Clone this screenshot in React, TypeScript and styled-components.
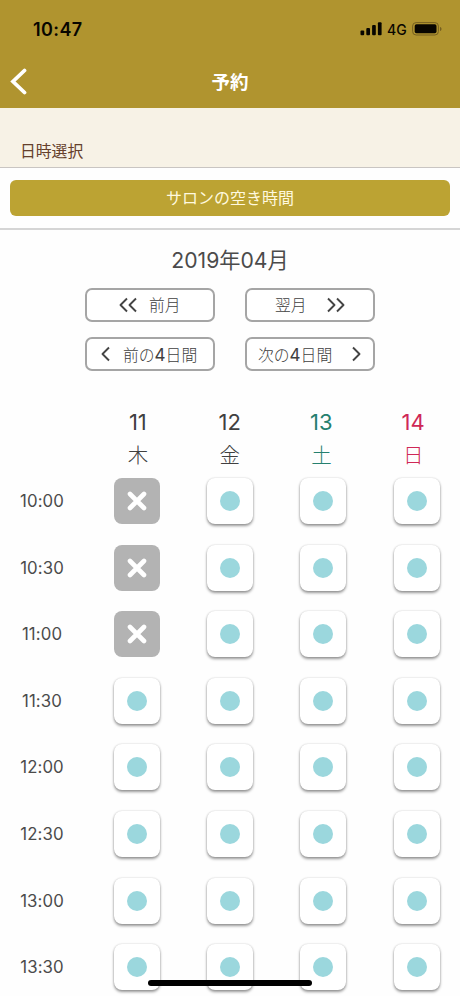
import React from "react";
import styled, { createGlobalStyle } from "styled-components";

const GlobalStyle = createGlobalStyle`
  * { box-sizing: border-box; }
  html, body { margin: 0; height: 100%; overflow: hidden; background: #fff; }
  body { font-family: Inter, "Noto Sans CJK JP", sans-serif; color: #4b4b4b; }
  button { font: inherit; color: inherit; margin: 0; padding: 0; border: 0; background: none; }
`;

const Screen = styled.main`
  position: relative;
  width: 460px;
  height: 996px;
  overflow: hidden;
  background: #fefefe;
`;

const Header = styled.header`
  height: 108px;
  background: #b0942f;
`;

const StatusBar = styled.div`
  height: 56px;
  padding: 2px 18px 0 33px;
  display: flex;
  align-items: center;
  justify-content: space-between;
  color: #080600;
`;

const Clock = styled.span`
  font-size: 18px;
  font-weight: 600;
  letter-spacing: 0.4px;
`;

const Indicators = styled.div`
  display: flex;
  align-items: center;
  svg { display: block; }
`;

const Network = styled.span`
  width: 20px;
  margin: 1px 5px 0 5px;
  font-size: 14px;
  line-height: 16px;
  font-weight: 500;
`;

const NavBar = styled.nav`
  height: 52px;
  display: grid;
  grid-template-columns: 60px 1fr 60px;
  align-items: center;
`;

const BackButton = styled.button`
  height: 52px;
  padding-left: 9px;
  display: flex;
  align-items: center;
`;

const Title = styled.h1`
  margin: 0;
  color: #fff;
  font-size: 18.5px;
  line-height: 28px;
  font-weight: 700;
  text-align: center;
`;

const SectionHeading = styled.h2`
  height: 60px;
  margin: 0;
  padding: 32px 20px 0;
  background: #f7f2e6;
  border-bottom: 1px solid #c9c5c2;
  color: #65402c;
  font-size: 15.8px;
  line-height: 24px;
  font-weight: 400;
`;

const Availability = styled.section`
  height: 62px;
  padding: 12px 10px 0;
  border-bottom: 2px solid #d5d5d5;
`;

const AvailabilityButton = styled.button`
  display: block;
  width: 440px;
  height: 36px;
  border-radius: 6px;
  background: #bca333;
  color: #fff9df;
  font-size: 16px;
  line-height: 34px;
  text-align: center;
`;

const Month = styled.h3`
  height: 58px;
  margin: 0;
  padding-top: 15px;
  font-size: 21.2px;
  line-height: 30px;
  font-weight: 380;
  text-align: center;
`;

const Pager = styled.div`
  display: grid;
  grid-template-columns: 130px 130px;
  gap: 15px 30px;
  justify-content: center;
`;

const PagerButton = styled.button<{ $start: number; $gap: number }>`
  height: 34px;
  padding-left: ${(p) => p.$start}px;
  border: 2px solid #a5a5a5;
  border-radius: 7px;
  background: #fff;
  display: flex;
  align-items: center;
  gap: ${(p) => p.$gap}px;
  font-size: 15.8px;
  line-height: 24px;
  font-weight: 300;
  white-space: nowrap;
  svg { display: block; flex: none; }
`;

const PagerLabel = styled.span`
  padding-top: 2px;
  color: #404040;
`;

const Digit = styled.span`
  font-size: 17px;
  font-weight: 400;
`;

const DayHeader = styled.div`
  height: 107px;
  padding: 33px 1px 0 92px;
  display: grid;
  grid-template-columns: repeat(4, 91.75px);
`;

const Day = styled.div<{ $color: string }>`
  display: flex;
  flex-direction: column;
  align-items: center;
  color: ${(p) => p.$color};
`;

const DayNumber = styled.span`
  height: 36px;
  font-size: 22px;
  line-height: 36px;
  font-weight: 380;
`;

const Weekday = styled.span`
  font-size: 20.5px;
  line-height: 32px;
  font-weight: 300;
`;

const Row = styled.div`
  height: 66.6px;
  padding-left: 20px;
  display: grid;
  grid-template-columns: 70px repeat(4, 93.4px);
  align-items: start;
`;

const Time = styled.time`
  width: 44px;
  text-align: center;
  font-size: 16.8px;
  line-height: 46px;
  letter-spacing: 0.1px;
  font-weight: 390;
`;

const Slot = styled.button<{ $open: boolean }>`
  width: 46px;
  height: 46px;
  justify-self: center;
  display: flex;
  align-items: center;
  justify-content: center;
  border-radius: 8px;
  background: ${(p) => (p.$open ? "#fff" : "#b3b3b3")};
  box-shadow: ${(p) => (p.$open ? "0 2px 3px rgba(0,0,0,.4), 0 0 2px rgba(0,0,0,.18)" : "none")};
`;

const Dot = styled.span`
  width: 20px;
  height: 20px;
  border-radius: 50%;
  background: #9bd7dd;
`;

const HomeIndicator = styled.div`
  position: absolute;
  left: 148px;
  top: 980px;
  width: 164px;
  height: 6px;
  border-radius: 3px;
  background: #000;
`;

const Arrow = ({ right = false, double = false }: { right?: boolean; double?: boolean }) => (
  <svg width={double ? 18 : 9} height="16" viewBox={`0 0 ${double ? 18 : 9} 16`} fill="none" stroke="#444" strokeWidth="1.9" strokeLinejoin="round">
    <path d={right ? "M1 1.5 7.5 8 1 14.5" : "M8 1.5 1.5 8 8 14.5"} />
    {double && <path d={right ? "M10 1.5 16.5 8 10 14.5" : "M17 1.5 10.5 8 17 14.5"} />}
  </svg>
);

const days = [
  { n: 11, w: "木", color: "#404040" },
  { n: 12, w: "金", color: "#404040" },
  { n: 13, w: "土", color: "#25806f" },
  { n: 14, w: "日", color: "#cf2856" },
];

const times = ["10:00", "10:30", "11:00", "11:30", "12:00", "12:30", "13:00", "13:30"];

export default function App() {
  return (
    <Screen>
      <GlobalStyle />
      <Header>
        <StatusBar>
          <Clock>10:47</Clock>
          <Indicators>
            <svg width="22" height="14" viewBox="0 0 22 14" fill="currentColor">
              <rect x="0.5" y="8.5" width="3.7" height="4.7" rx="1" />
              <rect x="6.3" y="6" width="3.7" height="7.2" rx="1" />
              <rect x="12.1" y="3" width="3.7" height="10.2" rx="1" />
              <rect x="17.9" y="0.3" width="3.7" height="12.9" rx="1" />
            </svg>
            <Network>4G</Network>
            <svg width="30" height="14" viewBox="0 0 30 14">
              <rect x="0.6" y="0.6" width="25.8" height="12.4" rx="3.5" fill="none" stroke="#755f20" />
              <rect x="2.7" y="2.3" width="21.8" height="9" rx="1.8" fill="currentColor" />
              <path d="M28 5v4c1-.4 1.5-1.1 1.5-2S29 5.400 28 5Z" fill="#755f20" />
            </svg>
          </Indicators>
        </StatusBar>
        <NavBar>
          <BackButton aria-label="戻る">
            <svg width="20" height="28" viewBox="0 0 20 28" fill="none" stroke="#fff" strokeWidth="3.8" strokeLinecap="round">
              <path d="M15.500 2.500 4 13.500 15.500 24.500" />
            </svg>
          </BackButton>
          <Title>予約</Title>
        </NavBar>
      </Header>
      <SectionHeading>日時選択</SectionHeading>
      <Availability>
        <AvailabilityButton>サロンの空き時間</AvailabilityButton>
      </Availability>
      <Month>2019年04月</Month>
      <Pager>
        <PagerButton $start={32} $gap={12}><Arrow double /><PagerLabel>前月</PagerLabel></PagerButton>
        <PagerButton $start={28} $gap={20}><PagerLabel>翌月</PagerLabel><Arrow double right /></PagerButton>
        <PagerButton $start={14} $gap={13}><Arrow /><PagerLabel>前の<Digit>4</Digit>日間</PagerLabel></PagerButton>
        <PagerButton $start={11} $gap={20}><PagerLabel>次の<Digit>4</Digit>日間</PagerLabel><Arrow right /></PagerButton>
      </Pager>
      <DayHeader>
        {days.map((d) => (
          <Day key={d.n} $color={d.color}>
            <DayNumber>{d.n}</DayNumber>
            <Weekday>{d.w}</Weekday>
          </Day>
        ))}
      </DayHeader>
      {times.map((time, row) => (
        <Row key={time}>
          <Time>{time}</Time>
          {days.map((d, col) => {
            const open = col > 0 || row > 2;
            return (
              <Slot key={d.n} $open={open} aria-label={`${d.n}日 ${time}`}>
                {open ? <Dot /> : (
                  <svg width="20" height="20" viewBox="0 0 20 20" stroke="#fff" strokeWidth="4.600" strokeLinecap="round">
                    <path d="M3 3 17 17M17 3 3 17" />
                  </svg>
                )}
              </Slot>
            );
          })}
        </Row>
      ))}
      <HomeIndicator />
    </Screen>
  );
}
